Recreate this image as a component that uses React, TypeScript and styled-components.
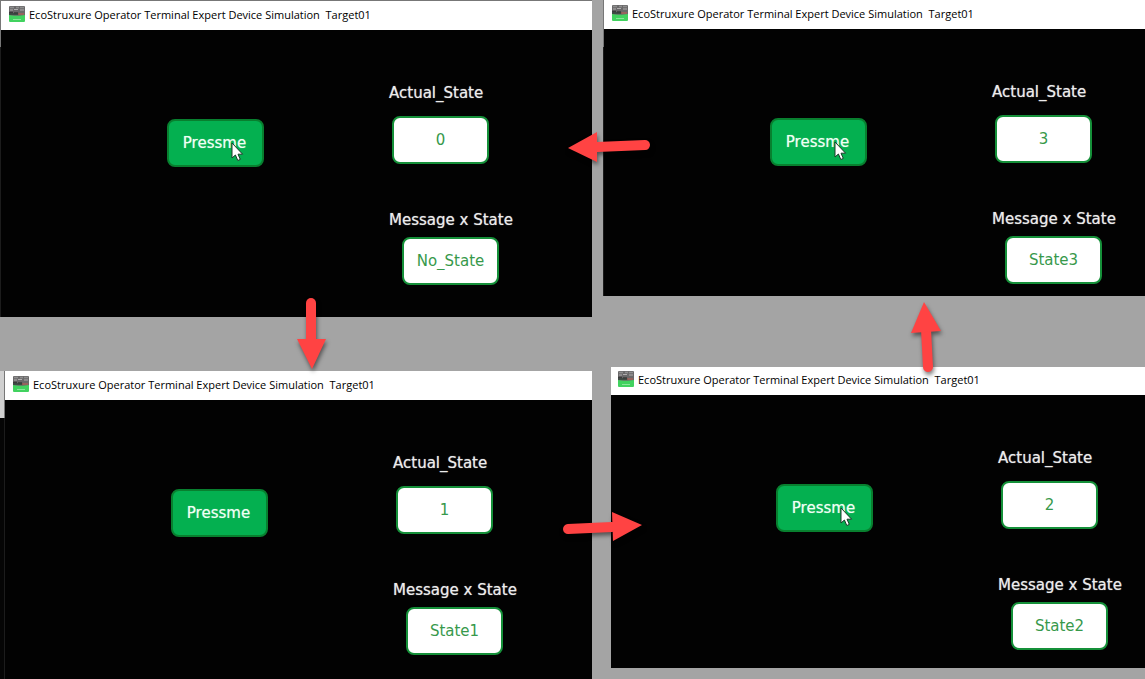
import React, { useId } from "react";
import styled, { createGlobalStyle } from "styled-components";

const GlobalStyle = createGlobalStyle`
  * { box-sizing: border-box; }
  body { margin: 0; background: #a4a4a4; }
`;

const Page = styled.main`
  display: flex;
  gap: 11px;
  min-height: 100vh;
  overflow: hidden;
  background: #a4a4a4;
  font-family: "DejaVu Sans", sans-serif;
`;

const Column = styled.div<{ $share: number; $gap: number }>`
  position: relative;
  flex: ${(p) => p.$share} 1 0;
  min-width: 0;
  display: flex;
  flex-direction: column;
  gap: ${(p) => p.$gap}px;
`;

const Capture = styled.section<{ $offset: number }>`
  display: flex;
  margin-left: ${(p) => p.$offset}px;
`;

const Edge = styled.div<{ $width: number; $tone: string }>`
  flex: none;
  width: ${(p) => p.$width}px;
  border-right: 1px solid #777;
  border-image: linear-gradient(#777 48px, #1c1c1c 48px) 1;
  background: linear-gradient(${(p) => p.$tone} 47px, #050505 47px);
`;

const Frame = styled.div<{ $topBorder: boolean }>`
  flex: 1;
  min-width: 0;
  border-top: ${(p) => (p.$topBorder ? 1 : 0)}px solid #777;
`;

const TitleBar = styled.header<{ $height: number; $crop: number }>`
  display: flex;
  align-items: flex-end;
  gap: 4px;
  height: ${(p) => p.$height}px;
  padding: 0 8px 8px ${(p) => 8 - p.$crop}px;
  background: #fff;
`;

const Title = styled.h2`
  margin: 0;
  font: 400 11px/14px "Open Sans", sans-serif;
  color: #000;
  white-space: pre;
`;

const Screen = styled.div<{ $bottom: number; $crop: number }>`
  display: flex;
  align-items: flex-start;
  gap: 125px;
  padding: 53px 0 ${(p) => p.$bottom}px ${(p) => 166 - p.$crop}px;
  background: #020202;
`;

const PressButton = styled.button`
  position: relative;
  flex: none;
  width: 97px;
  height: 48px;
  margin-top: 36px;
  padding: 0 2px 0 0;
  border: 2px solid #08802f;
  border-radius: 8px;
  background: #04b050;
  color: #f0fff4;
  font: 15px/20px "DejaVu Sans", sans-serif;
  text-shadow: 0 0 1px rgba(240, 255, 244, 0.6);
`;

const Pointer = styled.svg`
  position: absolute;
  left: 62px;
  top: 21px;
`;

const Readouts = styled.div`
  display: flex;
  flex-direction: column;
  gap: 46px;
`;

const Readout = styled.div<{ $indent: number; $gap: number }>`
  display: flex;
  flex-direction: column;
  gap: ${(p) => p.$gap}px;

  input {
    margin-left: ${(p) => p.$indent}px;
  }
`;

const Label = styled.label`
  color: #ececec;
  font-size: 15px;
  line-height: 20px;
  white-space: nowrap;
  text-shadow: 0 0 1px rgba(236, 236, 236, 0.7);
`;

const Field = styled.input`
  width: 97px;
  height: 48px;
  padding: 0;
  border: 2px solid #159039;
  border-radius: 8px;
  background: #fff;
  color: #37994b;
  font: 15px/20px "DejaVu Sans", sans-serif;
  text-align: center;
`;

const ArrowSvg = styled.svg<{ $top: number; $left?: number; $right?: number }>`
  position: absolute;
  z-index: 1;
  top: ${(p) => p.$top}px;
  ${(p) => (p.$left !== undefined ? `left: ${p.$left}px;` : `right: ${p.$right}px;`)}
  overflow: visible;
  filter: drop-shadow(1px 3px 2px rgba(0, 0, 0, 0.5));
  pointer-events: none;
`;

function AppIcon() {
  return (
    <svg width="16" height="16" viewBox="0 0 16 16" aria-hidden="true">
      <rect width="16" height="11" rx="1" fill="#6a696a" />
      <path d="M1 1.500h4M7 1.500h3M11 1.500h4" stroke="#8e8e8e" strokeWidth="1.500" />
      <path d="M1 4h3M5 3.500h4M11 4h4" stroke="#b0aeae" strokeWidth="1" />
      <path d="M0 6.500h4M5 7h4" stroke="#3a3a3a" strokeWidth="1.500" />
      <path d="M0 8h10" stroke="#33403a" strokeWidth="1.500" />
      <path d="M9 8h6" stroke="#a8605a" strokeWidth="1.500" />
      <path d="M0 9c4 1 11 1 16 0V15a1 1 0 0 1-1 1H1a1 1 0 0 1-1-1z" fill="#41d25f" />
      <path d="M4 13.500h8" stroke="#8be59b" strokeWidth="1" />
    </svg>
  );
}

function MousePointer() {
  return (
    <Pointer width="13" height="20" viewBox="0 0 13 20" aria-hidden="true">
      <path
        d="M1 1v15l3.400-3 2.400 5.500 2.500-1.100-2.300-5.200h4.600z"
        fill="#fff"
        stroke="#1b3a2a"
        strokeWidth="1"
        strokeLinejoin="round"
      />
    </Pointer>
  );
}

type ArrowProps = {
  top: number;
  left?: number;
  right?: number;
  width: number;
  height: number;
  head: string;
  shaft: string;
};

function Arrow({ top, left, right, width, height, head, shaft }: ArrowProps) {
  return (
    <ArrowSvg $top={top} $left={left} $right={right} width={width} height={height} aria-hidden="true">
      <path d={shaft} stroke="#ff4343" strokeWidth="10" strokeLinecap="round" fill="none" />
      <path d={head} fill="#ff4343" />
    </ArrowSvg>
  );
}

type SimulationProps = {
  value: string;
  message: string;
  bottom: number;
  offset?: number;
  edge?: number;
  edgeTone?: string;
  barHeight?: number;
  crop?: number;
  topBorder?: boolean;
  pointer?: boolean;
};

function Simulation({
  value,
  message,
  bottom,
  offset = 0,
  edge = 0,
  edgeTone = "#777",
  barHeight = 29,
  crop = 0,
  topBorder = false,
  pointer = true,
}: SimulationProps) {
  const id = useId();
  return (
    <Capture $offset={offset}>
      {edge > 0 && <Edge $width={edge} $tone={edgeTone} />}
      <Frame $topBorder={topBorder}>
        <TitleBar $height={barHeight} $crop={crop}>
          <AppIcon />
          <Title>{"EcoStruxure Operator Terminal Expert Device Simulation  Target01"}</Title>
        </TitleBar>
        <Screen $bottom={bottom} $crop={crop}>
          <PressButton type="button">
            Pressme
            {pointer && <MousePointer />}
          </PressButton>
          <Readouts>
            <Readout $indent={3} $gap={13}>
              <Label htmlFor={id + "state"}>Actual_State</Label>
              <Field id={id + "state"} value={value} readOnly />
            </Readout>
            <Readout $indent={13} $gap={7}>
              <Label htmlFor={id + "message"}>Message x State</Label>
              <Field id={id + "message"} value={message} readOnly />
            </Readout>
          </Readouts>
        </Screen>
      </Frame>
    </Capture>
  );
}

export default function App() {
  return (
    <>
      <GlobalStyle />
      <Page>
        <Column $share={592} $gap={54}>
          <Simulation value="0" message="No_State" bottom={32} edge={1} topBorder />
          <Simulation value="1" message="State1" bottom={24} edge={5} edgeTone="#d0d0d0" pointer={false} />
          <Arrow top={297} left={296} width={32} height={74} shaft="M15 6V44" head="M1 42H30L16 72z" />
          <Arrow top={131} right={-59} width={84} height={33} shaft="M78 14L30 16" head="M30 1V31L1 17z" />
          <Arrow top={511} right={-51} width={81} height={32} shaft="M6 18L50 16" head="M50 1L51 30L80 14z" />
        </Column>
        <Column $share={542} $gap={71}>
          <Simulation value="3" message="State3" bottom={12} edge={1} />
          <Simulation value="2" message="State2" bottom={18} offset={8} barHeight={28} crop={1} />
          <Arrow top={301} left={307} width={33} height={74} shaft="M18 66L16 28" head="M1 32L31 30L14 1z" />
        </Column>
      </Page>
    </>
  );
}
